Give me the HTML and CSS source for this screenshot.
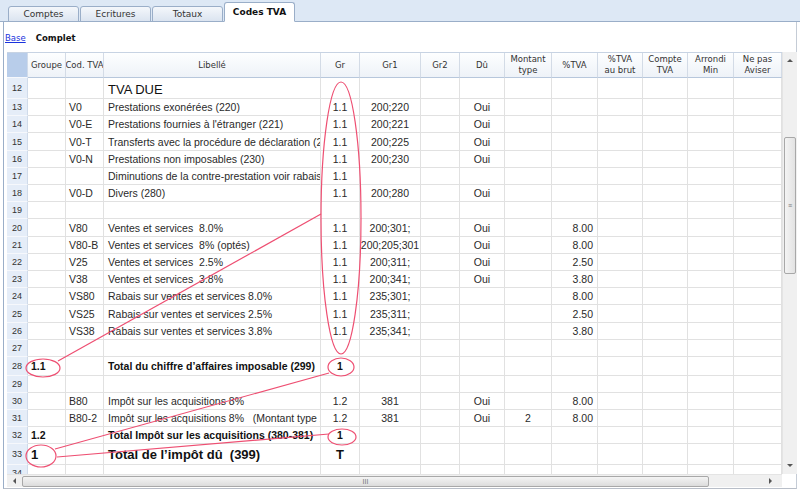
FILE: index.html
```html
<!DOCTYPE html>
<html lang="fr">

<head>
  <meta charset="UTF-8" />
  <title>Codes TVA</title>
  <link rel="stylesheet" href="styles.css">
</head>

<body>
  <div class="tabbar">
    <div class="tab">Comptes</div>
    <div class="tab">Ecritures</div>
    <div class="tab">Totaux</div>
    <div class="tab active">Codes TVA</div>
  </div>

  <div class="panel">
    <div class="views">
      <a href="#" class="view-link">Base</a>
      <span class="view-current">Complet</span>
    </div>

    <div class="gridwrap">
      <div class="data">
        <div class="row head">
          <div class="cell rn"></div>
          <div class="cell">Groupe</div>
          <div class="cell">Cod. TVA</div>
          <div class="cell">Libellé</div>
          <div class="cell">Gr</div>
          <div class="cell">Gr1</div>
          <div class="cell">Gr2</div>
          <div class="cell">Dû</div>
          <div class="cell">Montant<br>type</div>
          <div class="cell">%TVA</div>
          <div class="cell">%TVA<br>au brut</div>
          <div class="cell">Compte<br>TVA</div>
          <div class="cell">Arrondi<br>Min</div>
          <div class="cell">Ne pas<br>Aviser</div>
        </div>
        <div id="rows"></div>
      </div>

      <div class="vscroll">
        <div class="arrow up"></div>
        <div class="vthumb"><span class="grip">≡</span></div>
        <div class="arrow down"></div>
      </div>
      <div class="hscroll">
        <div class="arrow left"></div>
        <div class="hthumb"><span class="grip">III</span></div>
        <div class="arrow right"></div>
      </div>
    </div>
  </div>

  <!-- annotations drawn over the grid -->
  <svg class="marks" width="800" height="491" viewBox="0 0 800 491">
    <ellipse cx="341" cy="218" rx="20" ry="136" />
    <line x1="58" y1="361" x2="321" y2="214" />
    <ellipse cx="43" cy="368" rx="17" ry="9" />
    <ellipse cx="341" cy="367" rx="13" ry="9" />
    <line x1="329" y1="373" x2="55" y2="449" />
    <ellipse cx="41" cy="456" rx="15" ry="11" />
    <ellipse cx="342" cy="437" rx="14" ry="8" />
    <line x1="57" y1="457" x2="329" y2="434" />
  </svg>

  <script>
    // num, groupe, cod, libelle, gr, gr1, du, montant type, %tva, row class
    const rows = [
      [12, "", "", "TVA DUE", "", "", "", "", "", "big"],
      [13, "", "V0", "Prestations exonérées (220)", "1.1", "200;220", "Oui", "", ""],
      [14, "", "V0-E", "Prestations fournies à l'étranger (221)", "1.1", "200;221", "Oui", "", ""],
      [15, "", "V0-T", "Transferts avec la procédure de déclaration (225)", "1.1", "200;225", "Oui", "", "", "h18"],
      [16, "", "V0-N", "Prestations non imposables (230)", "1.1", "200;230", "Oui", "", ""],
      [17, "", "", "Diminutions de la contre-prestation voir rabais", "1.1", "", "", "", ""],
      [18, "", "V0-D", "Divers (280)", "1.1", "200;280", "Oui", "", ""],
      [19, "", "", "", "", "", "", "", ""],
      [20, "", "V80", "Ventes et services\u00a0 8.0%", "1.1", "200;301;", "Oui", "", "8.00", "h18"],
      [21, "", "V80-B", "Ventes et services\u00a0 8% (optés)", "1.1", "200;205;301", "Oui", "", "8.00"],
      [22, "", "V25", "Ventes et services\u00a0 2.5%", "1.1", "200;311;", "Oui", "", "2.50"],
      [23, "", "V38", "Ventes et services\u00a0 3.8%", "1.1", "200;341;", "Oui", "", "3.80"],
      [24, "", "VS80", "Rabais sur ventes et services 8.0%", "1.1", "235;301;", "", "", "8.00"],
      [25, "", "VS25", "Rabais sur ventes et services 2.5%", "1.1", "235;311;", "", "", "2.50", "h18"],
      [26, "", "VS38", "Rabais sur ventes et services 3.8%", "1.1", "235;341;", "", "", "3.80"],
      [27, "", "", "", "", "", "", "", ""],
      [28, "1.1", "", "Total du chiffre d\u2019affaires imposable (299)", "1", "", "", "", "", "total h19"],
      [29, "", "", "", "", "", "", "", ""],
      [30, "", "B80", "Impôt sur les acquisitions 8%", "1.2", "381", "Oui", "", "8.00"],
      [31, "", "B80-2", "Impôt sur les acquisitions 8%\u00a0\u00a0 (Montant type 2)", "1.2", "381", "Oui", "2", "8.00"],
      [32, "1.2", "", "Total Impôt sur les acquisitions (380-381)", "1", "", "", "", "", "total"],
      [33, "1", "", "Total de l\u2019impôt dû\u00a0 (399)", "T", "", "", "", "", "grand"],
      [34, "", "", "", "", "", "", "", ""]
    ];

    const classes = ["rn", "grp", "cod", "lib", "gr", "gr1", "gr2", "du", "mt", "tva", "", "", "", ""];
    const container = document.getElementById("rows");

    for (const r of rows) {
      const [num, grp, cod, lib, gr, gr1, du, mt, tva, cls] = r;
      const values = [num, grp, cod, lib, gr, gr1, "", du, mt, tva, "", "", "", ""];
      const row = document.createElement("div");
      row.className = "row" + (cls ? " " + cls : "");
      values.forEach((v, i) => {
        const cell = document.createElement("div");
        cell.className = "cell " + classes[i];
        cell.textContent = v;
        row.appendChild(cell);
      });
      container.appendChild(row);
    }
  </script>
</body>

</html>
```

FILE: styles.css
```css
body {
  margin: 0;
  width: 800px;
  height: 491px;
  overflow: hidden;
  background: #fff;
  font-family: "Liberation Sans", Arial, sans-serif;
  color: #2a2a2a;
  position: relative;
}

/* tabs */
.tabbar {
  height: 22px;
  box-sizing: border-box;
  background: #dde8f5;
  display: flex;
  align-items: flex-end;
  padding-left: 8px;
  border-bottom: 1px solid #9aaec8;
}

.tab {
  width: 69px;
  height: 14px;
  margin-right: 1px;
  margin-bottom: -1px;
  border: 1px solid #9aaec8;
  border-radius: 3px 3px 0 0;
  background: linear-gradient(#f4f7fb, #dbe4f0);
  font-family: "DejaVu Sans", sans-serif;
  font-size: 9px;
  color: #333;
  text-align: center;
  line-height: 14px;
}

.tab.active {
  height: 18px;
  line-height: 18px;
  background: #fff;
  border-bottom-color: #fff;
  font-weight: bold;
  color: #111;
}

/* panel */
.panel {
  margin-left: 3px;
  width: 794px;
  height: 467px;
  border-left: 1px solid #9aaec8;
  border-right: 1px solid #c5ccd6;
  border-bottom: 1px solid #b8bec8;
  box-sizing: border-box;
}

.views {
  height: 30px;
  display: flex;
  align-items: center;
  padding-left: 1px;
  gap: 10px;
  font-family: "DejaVu Sans", sans-serif;
  font-size: 8.5px;
  padding-top: 1px;
  box-sizing: border-box;
}

.view-link {
  color: #1a33dd;
}

.view-current {
  font-weight: bold;
  color: #111;
}

/* grid */
.gridwrap {
  margin-left: 3px;
  display: grid;
  grid-template-columns: 775px 15px;
  grid-template-rows: 422px 13px;
}

.data {
  overflow: hidden;
  border-top: 1px solid #c7d3e3;
  box-sizing: border-box;
}

.row {
  display: grid;
  grid-template-columns: 21px 38px 38px 217px 39px 61px 39px 45px 47px 46px 45px 45px 46px 48px;
  height: 17px;
  font-size: 10.5px;
}

.row.h18 { height: 18px; }
.row.h19 { height: 19px; }

.cell {
  border-right: 1px solid #e1e1e1;
  border-bottom: 1px solid #e1e1e1;
  overflow: hidden;
  white-space: nowrap;
  display: flex;
  align-items: center;
  box-sizing: border-box;
}

.row.head {
  height: 25px;
  font-family: "DejaVu Sans", sans-serif;
  font-size: 8.5px;
  color: #333;
}

.head .cell {
  justify-content: center;
  text-align: center;
  line-height: 11px;
  background: linear-gradient(#fdfeff, #eef2f8);
  border-right: 1px solid #d3dbe6;
  border-bottom: 1px solid #b7c7dc;
}

.head .cell.rn {
  background: #b8cdea;
}

.cell.rn {
  justify-content: center;
  background: #e5edf8;
  border-right: 1px solid #d0dbea;
  border-bottom: 1px solid #f6f8fc;
  font-size: 9px;
  color: #333;
}

.grp { padding-left: 3px; }
.cod { padding-left: 3px; }
.lib { padding-left: 4px; }
.gr, .gr1, .gr2, .du, .mt { justify-content: center; }
.tva { justify-content: flex-end; padding-right: 4px; }

.row.big { height: 21px; }
.big .lib { font-size: 13px; padding-top: 2px; color: #111; }

.total .grp,
.total .lib,
.total .gr { font-weight: bold; color: #111; }

.row.grand { height: 21px; }
.grand .grp,
.grand .lib,
.grand .gr {
  font-weight: bold;
  font-size: 13px;
  color: #111;
}

/* scrollbars */
.vscroll {
  grid-row: 1;
  grid-column: 2;
  background: #f0f0f0;
  border-left: 1px solid #e4e4e4;
  position: relative;
}

.hscroll {
  grid-row: 2;
  grid-column: 1;
  background: #f0f0f0;
  border-top: 1px solid #e4e4e4;
  position: relative;
}

.arrow {
  position: absolute;
  width: 0;
  height: 0;
  border: 3px solid transparent;
}

.arrow.up { top: 7px; left: 4px; border-bottom-color: #555; border-top-width: 0; }
.arrow.down { bottom: 7px; left: 4px; border-top-color: #555; border-bottom-width: 0; }
.arrow.left { left: 6px; top: 3px; border-right-color: #555; border-left-width: 0; }
.arrow.right { right: 10px; top: 3px; border-left-color: #555; border-right-width: 0; }

.vthumb {
  position: absolute;
  top: 85px;
  left: 1px;
  width: 12px;
  height: 137px;
  box-sizing: border-box;
  border: 1px solid #a8a8a8;
  border-radius: 2px;
  background: linear-gradient(90deg, #f4f4f4, #e2e2e2);
  display: flex;
  align-items: center;
  justify-content: center;
}

.hthumb {
  position: absolute;
  left: 15px;
  top: 1px;
  width: 687px;
  height: 11px;
  box-sizing: border-box;
  border: 1px solid #a8a8a8;
  border-radius: 2px;
  background: linear-gradient(#f4f4f4, #dcdcdc);
  display: flex;
  align-items: center;
  justify-content: center;
}

.grip {
  font-size: 7px;
  color: #777;
  line-height: 1;
}

/* red annotations */
.marks {
  position: absolute;
  left: 0;
  top: 0;
  pointer-events: none;
}

.marks ellipse,
.marks line {
  fill: none;
  stroke: #ee4f72;
  stroke-width: 1.2;
}
```
